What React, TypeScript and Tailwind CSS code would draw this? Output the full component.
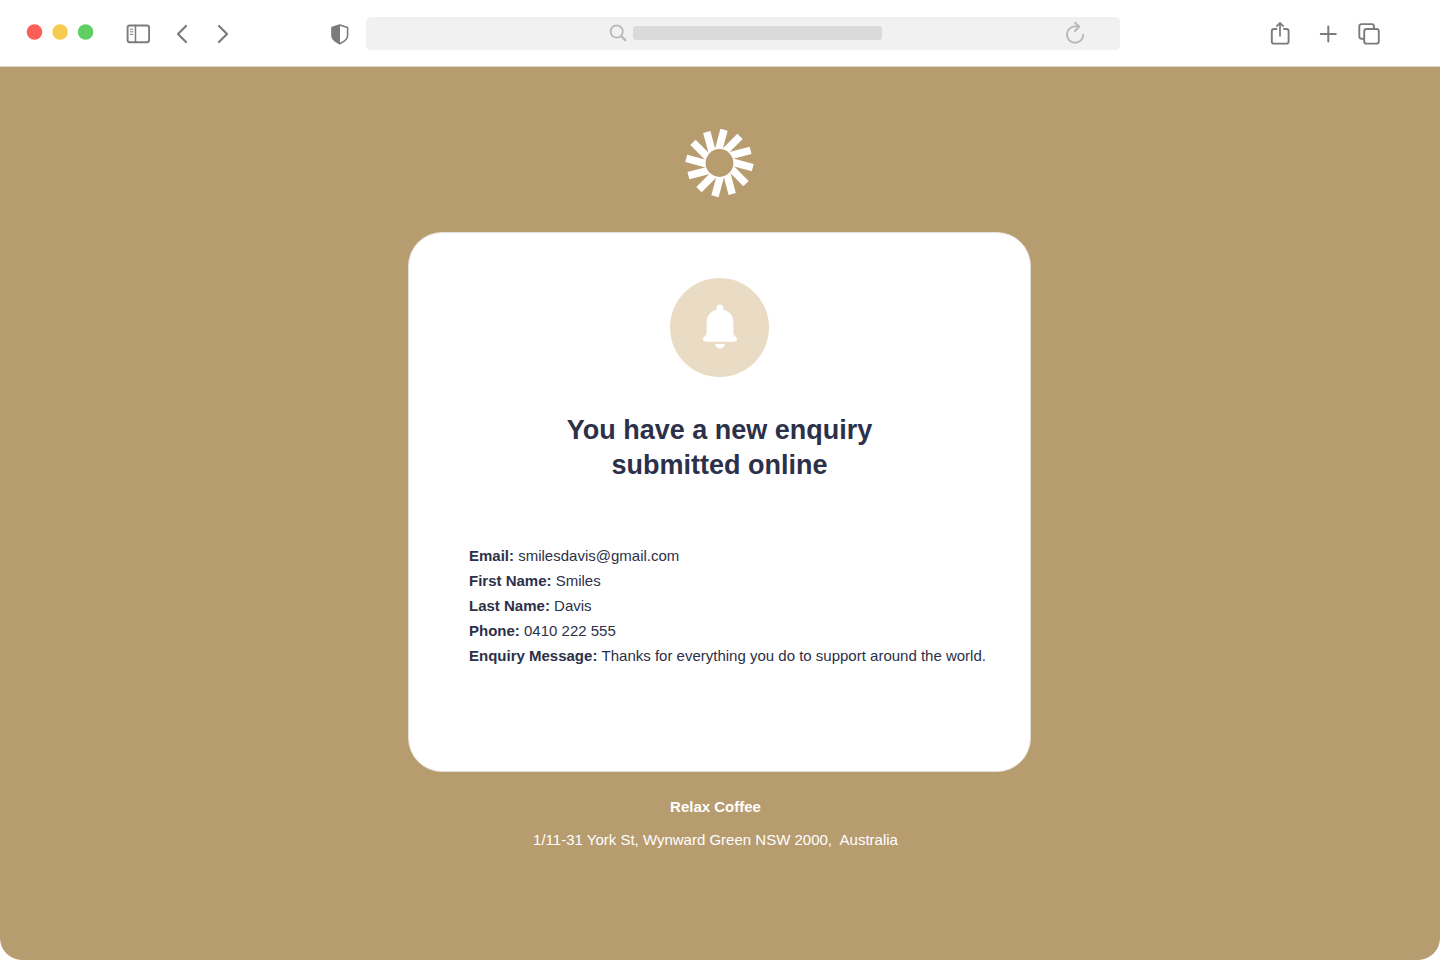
import type { ReactNode } from "react";

const enquiry = [
  { label: "Email", value: "smilesdavis@gmail.com" },
  { label: "First Name", value: "Smiles" },
  { label: "Last Name", value: "Davis" },
  { label: "Phone", value: "0410 222 555" },
  { label: "Enquiry Message", value: "Thanks for everything you do to support around the world." },
];

const spokes = [15, 45, 75, 105, 135, 165, 195, 225, 255, 285, 315, 345];

function ToolButton({ label, children }: { label: string; children: ReactNode }) {
  return (
    <button type="button" aria-label={label} className="size-6 shrink-0 text-[#7b7b7b]">
      <svg
        viewBox="0 0 24 24"
        fill="none"
        stroke="currentColor"
        strokeWidth="1.9"
        strokeLinecap="round"
        strokeLinejoin="round"
        className="size-6"
      >
        {children}
      </svg>
    </button>
  );
}

function Toolbar() {
  return (
    <header className="flex h-[67px] items-center border-b border-[#dcd8d0] bg-white">
      <div className="flex w-[366px] shrink-0 items-center justify-between pr-[14px] pl-[26px]">
        <div className="flex items-center gap-8">
          <svg viewBox="0 0 68 18" className="h-[18px] w-[68px]" aria-hidden="true">
            <circle cx="8.5" cy="8" r="7.8" fill="#fa6057" />
            <circle cx="34.1" cy="8" r="7.8" fill="#f7cb50" />
            <circle cx="59.6" cy="8" r="7.8" fill="#5fcf65" />
          </svg>
          <div className="flex items-center gap-5">
            <ToolButton label="Show sidebar">
              <rect x="1.6" y="4.5" width="21.5" height="16.8" rx="2" />
              <path d="M9.5 4.5v16.8" strokeWidth="1.5" />
              <path d="M4.3 8.2h2.4M4.3 10.8h2.4M4.3 13.4h2.4" strokeWidth="1" />
            </ToolButton>
            <ToolButton label="Back">
              <path d="m16 5-8 8 8 8" strokeWidth="2.2" />
            </ToolButton>
            <ToolButton label="Forward">
              <path d="m5 5 8 8-8 8" strokeWidth="2.2" />
            </ToolButton>
          </div>
        </div>
        <ToolButton label="Privacy report">
          <path d="M11.8 3.9 19.6 6.5v8.2c0 3-2.5 5.5-7.8 8.1-5.3-2.6-7.8-5.1-7.8-8.1V6.5z" strokeWidth="1.6" />
          <path d="M12 4v19c-5.3-2.6-8-5.1-8-8.2V6.6z" fill="currentColor" stroke="none" />
        </ToolButton>
      </div>

      <div className="relative grid h-[33px] min-w-0 flex-1 grid-cols-[1fr_auto_1fr] items-center rounded-[5px] bg-[#f1f1f1]">
        <input
          type="text"
          aria-label="Address"
          className="absolute inset-0 size-full rounded-[5px] bg-transparent px-3 outline-none"
        />
        <div className="pointer-events-none relative col-start-2 flex items-center gap-1.5 pl-1">
          <svg viewBox="0 0 18 18" className="size-[18px]" fill="none" stroke="#b7b7b7" strokeLinecap="round">
            <circle cx="7.7" cy="7.5" r="6.1" strokeWidth="1.8" />
            <path d="m12.4 12.3 3.8 3.8" strokeWidth="2.2" />
          </svg>
          <span className="h-[14px] w-[249px] rounded-[3px] bg-[#dadada]" />
        </div>
        <button type="button" aria-label="Reload" className="relative mr-8 size-6 justify-self-end">
          <svg
            viewBox="0 0 24 24"
            className="size-6"
            fill="none"
            stroke="#b7b7b7"
            strokeWidth="1.9"
            strokeLinecap="round"
            strokeLinejoin="round"
          >
            <path d="M19.3 13.6a8.2 8.2 0 1 1-8.2-8.2h3.8" />
            <path d="m11 1.8 4.2 3.8-4.2 4.4" />
          </svg>
        </button>
      </div>

      <div className="flex w-80 shrink-0 items-center justify-end gap-5 pr-[59px]">
        <ToolButton label="Share">
          <path d="M7.4 8H5a2.2 2.2 0 0 0-2.2 2.2v10.2a2.2 2.2 0 0 0 2.2 2.2h12.4a2.2 2.2 0 0 0 2.2-2.2V10.2A2.2 2.2 0 0 0 17.4 8H15" />
          <path d="M11 14.8V2M7.8 5.1 11 1.9l3.2 3.2" strokeWidth="1.7" />
        </ToolButton>
        <ToolButton label="New tab">
          <path d="M7.8 13h15M15.3 5.5v15" strokeWidth="2" />
        </ToolButton>
        <ToolButton label="Show all tabs">
          <path d="M7 17.8H4.5A2.2 2.2 0 0 1 2.3 15.6V5.3a2.2 2.2 0 0 1 2.2-2.2h10.2a2.2 2.2 0 0 1 2.2 2.2V8" />
          <rect x="7.2" y="8" width="14.6" height="14.6" rx="2.4" />
        </ToolButton>
      </div>
    </header>
  );
}

function Logo() {
  return (
    <svg viewBox="-34.5 -34 69 68" className="h-[68px] w-[69px]" role="img" aria-label="Relax Coffee">
      {spokes.map((angle) => (
        <rect key={angle} x="-8" y="-33.3" width="7.5" height="24" fill="#fff" transform={`rotate(${angle})`} />
      ))}
      <circle r="13.9" fill="#b79c70" />
    </svg>
  );
}

function BellBadge() {
  return (
    <div className="flex size-[99px] items-center justify-center rounded-full bg-[#e9dbc4]">
      <svg viewBox="0 0 35 48" className="h-12 w-[35px]" fill="#fff" aria-hidden="true">
        <g transform="translate(1 0)">
          <path d="M17 .5a3.3 3.3 0 0 1 3.3 3.3v1.6C26.2 6.9 30.4 11.7 30.4 17.7v12.2c0 1.3 3.6 2.9 3.6 5.3 0 1.5-1 2.5-2.5 2.5h-29C1 37.7 0 36.7 0 35.2c0-2.4 3.6-4 3.6-5.3V17.7C3.6 11.7 7.8 6.9 13.7 5.4V3.8A3.3 3.3 0 0 1 17 .5z" />
          <path d="M12.2 40h9.6c0 2.3-2.1 4.5-4.8 4.5S12.2 42.3 12.2 40z" />
        </g>
      </svg>
    </div>
  );
}

export default function App() {
  return (
    <div className="flex min-h-screen flex-col bg-white pb-px font-['Liberation_Sans',Arial,sans-serif]">
      <Toolbar />
      <main className="flex flex-1 flex-col items-center rounded-b-[22px] bg-[#b79c70] pt-[62px] pr-[25px] pb-16 pl-6">
        <Logo />
        <section className="mt-[35px] flex w-full max-w-[623px] flex-col items-center rounded-[34px] border border-[#e4e0d8] bg-white px-10 pt-[45px] pb-[103px] text-[#2c3049]">
          <BellBadge />
          <h1 className="mt-9 text-center text-[27px] leading-[35px] font-bold">
            You have a new enquiry
            <br />
            submitted online
          </h1>
          <dl className="mt-[60px] w-full pl-5 text-[15px] leading-[25px]">
            {enquiry.map(({ label, value }) => (
              <div key={label}>
                <dt className="inline font-bold">{label}:</dt> <dd className="inline">{value}</dd>
              </div>
            ))}
          </dl>
        </section>
        <footer className="mt-[22px] flex flex-col items-center gap-2 pr-2 text-[15px] leading-[25px] text-white">
          <p className="font-bold">Relax Coffee</p>
          <p className="whitespace-pre-wrap">1/11-31 York St, Wynward Green NSW 2000,{"  "}Australia</p>
        </footer>
      </main>
    </div>
  );
}
